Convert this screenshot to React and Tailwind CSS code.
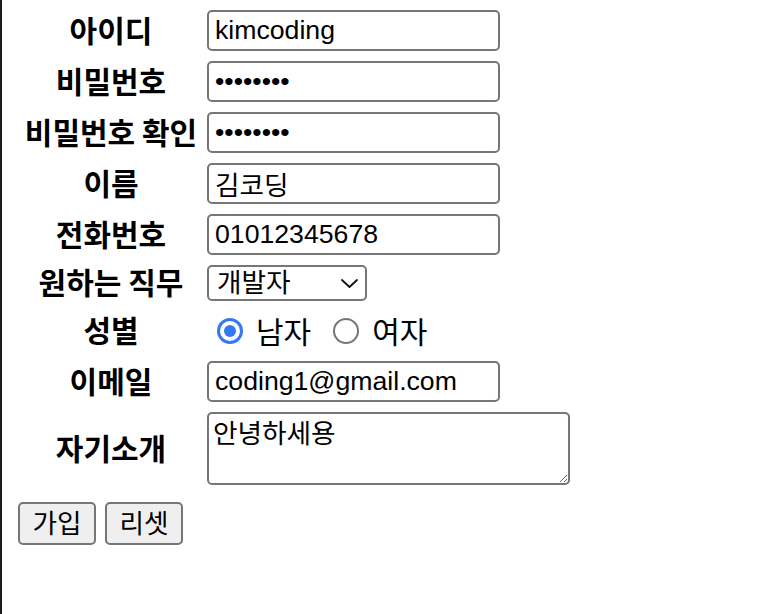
import React from "react";

const labelCls =
  "flex items-center justify-center pb-[4px] font-bold text-[30px] text-black leading-none [font-family:'Noto_Sans_CJK_KR',sans-serif]";
const inputFont = "[font-family:'Liberation_Sans','Noto_Sans_CJK_KR',sans-serif] text-[26.67px] text-black";
const inputCls =
  "h-[41px] w-[293px] rounded-[5px] border-2 border-[#767676] bg-white px-[6px] outline-none " + inputFont;

function Row({ label, children, className = "" }) {
  return (
    <div className={"grid grid-cols-[186px_auto] gap-x-[3px] " + className}>
      <div className={labelCls}>{label}</div>
      <div className="flex items-center">{children}</div>
    </div>
  );
}

function Radio({ checked }) {
  return checked ? (
    <span className="flex h-[26px] w-[26px] shrink-0 items-center justify-center rounded-full border-[3px] border-[#3478f6] bg-white">
      <span className="block h-[12px] w-[12px] rounded-full bg-[#3478f6]" />
    </span>
  ) : (
    <span className="block h-[26px] w-[26px] shrink-0 rounded-full border-2 border-[#767676] bg-white" />
  );
}

export default function App() {
  return (
    <div className="h-[614px] w-[758px] overflow-hidden border-l-2 border-[#1c1a16] bg-white">
      <div className="flex flex-col pl-[16px] pt-[10px]">
        <Row label="아이디" className="h-[41px]">
          <input readOnly className={inputCls} defaultValue="kimcoding" />
        </Row>
        <Row label="비밀번호" className="mt-[10px] h-[41px]">
          <input readOnly type="password" className={inputCls} defaultValue="12345678" />
        </Row>
        <Row label="비밀번호 확인" className="mt-[10px] h-[41px]">
          <input readOnly type="password" className={inputCls} defaultValue="12345678" />
        </Row>
        <Row label="이름" className="mt-[10px] h-[41px]">
          <input readOnly className={inputCls} defaultValue="김코딩" />
        </Row>
        <Row label="전화번호" className="mt-[10px] h-[41px]">
          <input readOnly className={inputCls} defaultValue="01012345678" />
        </Row>
        <Row label="원하는 직무" className="mt-[10px] h-[36px]">
          <div
            className={
              "flex h-[36px] w-[160px] items-center justify-between rounded-[5px] border-2 border-[#767676] bg-white pl-[8px] pr-[7px] " +
              inputFont
            }
          >
            <span className="leading-none">개발자</span>
            <svg width="17" height="9" viewBox="0 0 17 9" fill="none">
              <path d="M1 1l7.5 7L16 1" stroke="#111" strokeWidth="1.8" strokeLinecap="round" strokeLinejoin="round" />
            </svg>
          </div>
        </Row>
        <Row label="성별" className="mt-[11px] h-[38px]">
          <div className="flex items-center pl-[10px] text-[30px] leading-none text-black [font-family:'Noto_Sans_CJK_KR',sans-serif]">
            <Radio checked />
            <span className="ml-[13px] pb-[3px]">남자</span>
            <span className="ml-[22px] flex">
              <Radio />
            </span>
            <span className="ml-[13px] pb-[3px]">여자</span>
          </div>
        </Row>
        <Row label="이메일" className="mt-[11px] h-[41px]">
          <input readOnly className={inputCls} defaultValue="coding1@gmail.com" />
        </Row>
        <Row label="자기소개" className="mt-[10px] h-[73px]">
          <textarea
            readOnly
            className={
              "h-[73px] w-[363px] resize rounded-[5px] border-2 border-[#767676] bg-white px-[4px] py-[4px] leading-tight outline-none " +
              inputFont
            }
            defaultValue="안녕하세용"
          />
        </Row>
        <div className="mt-[17px] flex gap-[9px]">
          <button
            className={
              "flex h-[43px] w-[78px] items-center justify-center rounded-[5px] border-2 border-[#767676] bg-[#efefef] " +
              inputFont
            }
          >
            가입
          </button>
          <button
            className={
              "flex h-[43px] w-[78px] items-center justify-center rounded-[5px] border-2 border-[#767676] bg-[#efefef] " +
              inputFont
            }
          >
            리셋
          </button>
        </div>
      </div>
    </div>
  );
}
